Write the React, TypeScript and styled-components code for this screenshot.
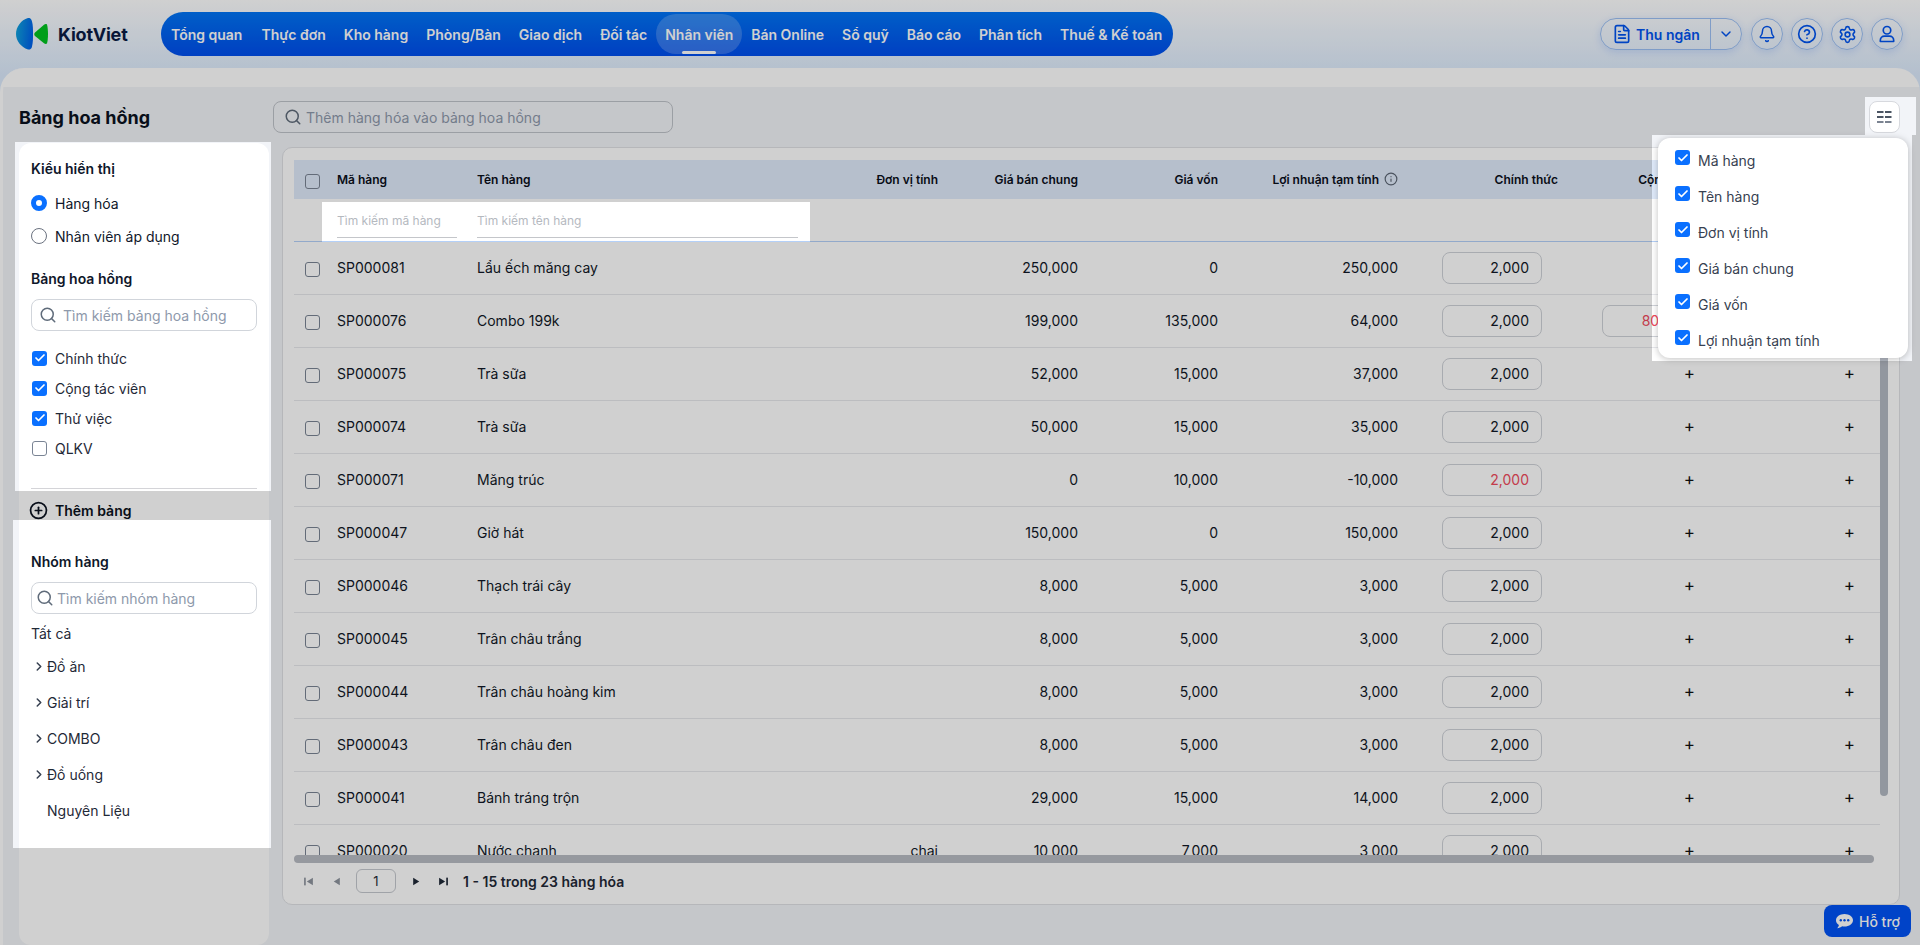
import React from "react";
import styled, { createGlobalStyle, css } from "styled-components";
import { Bell, Check, ChevronDown, ChevronRight, CircleHelp, FileText, Info, PlusCircle, Search, Settings } from "lucide-react";

const GlobalStyle = createGlobalStyle`
  html, body { margin: 0; padding: 0; }
  body { font-family: Inter, "Noto Sans", sans-serif; color: #0f172a; font-size: 14px; overflow: hidden; }
  * { box-sizing: border-box; }
`;

const Page = styled.div`
  position: relative; width: 1920px; height: 945px; overflow: hidden;
  display: flex; flex-direction: column;
  background: linear-gradient(180deg, #ffffff 0, #dcebfd 75px);
`;
/* Tour mask: dims everything except the highlighted holes */
const TourMask = styled.div`
  position: absolute; inset: 0; z-index: 100; pointer-events: none;
  background: rgba(0, 0, 0, 0.184);
  clip-path: path(evenodd, "M0 0H1920V945H0Z M15 142H271V491H15Z M13 520H271V848H13Z M322 202H810V242H322Z M1865 97H1916V135H1865Z M1652 135H1912V361H1652Z");
`;

const TopBar = styled.header`
  height: 68px; flex: none; display: flex; align-items: center; padding: 0 17px 0 16px;
`;
const Brand = styled.div`
  width: 145px; display: flex; align-items: center; gap: 9px;
`;
const BrandName = styled.span`
  font-size: 18px; font-weight: 700; color: #0b1b45; letter-spacing: -0.2px;
`;
const Nav = styled.nav`
  height: 44px; width: 1012px; padding: 0 1px; display: flex; align-items: center;
  border-radius: 22px; background: linear-gradient(180deg, #0074f5, #004eee);
`;
const NavItem = styled.a<{ $active?: boolean }>`
  position: relative; height: 40px; padding: 0 9px; display: flex; align-items: center;
  color: #fff; font-size: 14px; font-weight: 600; white-space: nowrap; border-radius: 20px;
  &:first-child { padding-right: 10px; }
  ${(p) => p.$active && css`
    background: rgba(255, 255, 255, 0.2);
    &::after { content: ""; position: absolute; left: 26px; right: 26px; bottom: 0; height: 3px; background: #fff; border-radius: 2px; }
  `}
`;
const Actions = styled.div`
  margin-left: auto; display: flex; align-items: center; gap: 8px; color: #0054f0;
`;
const RoleButton = styled.div`
  height: 32px; width: 142px; display: flex; align-items: center; border: 1px solid #9cc0f4;
  border-radius: 16px; box-shadow: 0 2px 8px rgba(0, 90, 240, 0.15); margin-right: 1px;
`;
const RoleMain = styled.div`
  width: 110px; height: 100%; display: flex; align-items: center; gap: 4px; padding-left: 11px;
  border-right: 1px solid #9cc0f4; font-weight: 600; font-size: 14px; white-space: nowrap;
`;
const RoleCaret = styled.div`
  flex: 1; display: flex; align-items: center; justify-content: center;
`;
const RoundButton = styled.div`
  width: 32px; height: 32px; border-radius: 50%; border: 1px solid #9cc0f4;
  display: flex; align-items: center; justify-content: center;
  box-shadow: 0 2px 8px rgba(0, 90, 240, 0.15);
`;

const Main = styled.main`
  flex: 1; min-height: 0; border-radius: 24px 24px 0 0; padding: 33px 20px 0 19px;
  display: flex;
  background: linear-gradient(180deg, #ffffff 19px, #f2f4f8 19px);
  border-left: 3px solid #fff; 
`;
const LeftColumn = styled.aside`
  width: 250px; margin-left: -3px; flex: none; display: flex; flex-direction: column;
`;
const PageTitle = styled.h1`
  margin: 0; height: 32px; display: flex; align-items: center; font-size: 18px; font-weight: 700; color: #0b1220;
`;
const SideCard = styled.div`
  flex: 1; margin-top: 10px; padding: 16px 12px 0; background: #fff; border-radius: 12px;
`;
const SideHeading = styled.div<{ $top?: number }>`
  height: 20px; line-height: 20px; font-size: 14px; font-weight: 600; color: #0f172a;
  margin-top: ${(p) => p.$top ?? 0}px;
`;
const RadioRow = styled.label<{ $top: number }>`
  height: 24px; display: flex; align-items: center; gap: 8px; margin-top: ${(p) => p.$top}px;
`;
const Radio = styled.span<{ $on?: boolean }>`
  width: 16px; height: 16px; border-radius: 50%; flex: none;
  ${(p) => p.$on ? css`border: 5px solid #0a70ff; background: #fff;` : css`border: 1px solid #6b7280; background: #fff;`}
`;
const SearchField = styled.div<{ $gap: number; $pad: number }>`
  height: 32px; margin-top: 10px; padding-left: ${(p) => p.$pad}px; display: flex; align-items: center;
  gap: ${(p) => p.$gap}px; border: 1px solid #d1d5db; border-radius: 8px; background: #fff; color: #5f6b7a;
`;
const Placeholder = styled.span`
  color: #8e99ab; font-size: 14px; white-space: nowrap;
`;
const CheckList = styled.div`
  margin-top: 15px; display: flex; flex-direction: column; gap: 6px;
`;
const CheckRow = styled.label`
  height: 24px; display: flex; align-items: center; gap: 8px; color: #1f2937;
`;
const Box = styled.span<{ $on?: boolean }>`
  width: 15px; height: 15px; margin-left: 1px; border-radius: 3px; flex: none; display: flex; align-items: center; justify-content: center;
  color: #fff; background: ${(p) => (p.$on ? "#0a70ff" : "transparent")};
  border: ${(p) => (p.$on ? "none" : "1.3px solid #7a8494")};
`;
const Rule = styled.hr`
  margin: 28px 0 0; border: 0; border-top: 1px solid #d4d4d8;
`;
const AddRow = styled.div`
  height: 20px; margin: 11px 0 0 -2px; display: flex; align-items: center; gap: 7px; font-weight: 600; color: #0b1220;
`;
const PlainText = styled.div`
  height: 20px; line-height: 20px; margin-top: 10px; color: #1f2937;
`;
const Tree = styled.div`
  margin-top: 4px;
`;
const TreeRow = styled.div`
  height: 36px; display: flex; align-items: center; padding-left: 16px; position: relative; color: #1f2937;
`;
const TreeCaret = styled.span`
  width: 14px; margin-left: -15px; margin-right: 1px; display: flex; color: #374151;
`;

const RightColumn = styled.section`
  flex: 1; min-width: 0; margin-left: 4px; display: flex; flex-direction: column;
`;
const Toolbar = styled.div`
  position: relative; height: 32px; flex: none; display: flex; justify-content: space-between;
`;
const ProductSearch = styled(SearchField)`
  width: 400px; margin-top: 0; border-color: #bfc3c9; background: transparent;
`;
const ColumnButton = styled.div`
  width: 31px; height: 32px; border: 1px solid #d7d9de; border-radius: 8px; background: #fff;
  display: flex; align-items: center; justify-content: center;
`;
const ColumnMenu = styled.div`
  position: absolute; top: 37px; right: -8px; width: 250px; height: 220px; padding-top: 4px;
  background: #fff; border-radius: 12px; box-shadow: 0 1px 7px rgba(0, 0, 0, 0.25); z-index: 10;
`;
const MenuItem = styled.div`
  height: 36px; padding-left: 16px; display: flex; align-items: center; gap: 8px; color: #374151;
  ${Box} { margin-top: -5px; }
`;

const TableCard = styled.div`
  margin: 14px 0 0 9px; height: 758px; flex: none; display: flex; flex-direction: column;
  background: #fff; border: 1px solid #dfe1e5; border-radius: 10px; padding: 12px 11px 0;
`;
const TableArea = styled.div`
  position: relative; height: 703px; flex: none; display: flex; flex-direction: column;
`;
const columns = css`
  display: grid; grid-template-columns: 36px 147px 323px 138px 140px 140px 180px 160px 160px 160px; width: 1586px; align-items: center;
`;
const HeaderRow = styled.div`
  ${columns}; height: 39px; flex: none; background: #dfeafa; font-size: 12px; font-weight: 600; color: #0b0f1a;
`;
const FilterRow = styled.div`
  ${columns}; height: 43px; flex: none; border-bottom: 1px solid #b4d0f8;
`;
const RowsViewport = styled.div`
  flex: 1; min-height: 0; overflow: hidden;
`;
const BodyRow = styled.div`
  ${columns}; height: 53px; border-bottom: 1px solid #e7e8ec; color: #111827;
`;
const BoxCell = styled.div`
  display: flex; justify-content: center;
  ${Box} { margin-left: 0; margin-top: 2px; }
`;
const HeaderBoxCell = styled(BoxCell)`
  ${Box} { margin-top: 4px; }
`;
const LeftCell = styled.div`
  padding: 0 0 1px 7px; white-space: nowrap;
`;
const NameCell = styled.div`
  padding-bottom: 1px; white-space: nowrap;
`;
const RightCell = styled.div`
  display: flex; justify-content: flex-end; align-items: center; gap: 5px; padding-bottom: 1px; white-space: nowrap;
`;
const FilterField = styled.div<{ $left: number; $width: number }>`
  grid-column: span 1; margin-left: ${(p) => p.$left}px; width: ${(p) => p.$width}px; height: 29px; margin-top: 7px;
  padding-top: 4px; border-bottom: 1px solid #c4c6ca; font-size: 12px; color: #b5b9bf; white-space: nowrap;
`;
const MoneyCell = styled.div`
  display: flex; justify-content: flex-end; padding-right: 16px;
`;
const MoneyBox = styled.div<{ $red?: boolean }>`
  width: 100px; height: 32px; padding: 0 12px 1px 0; display: flex; align-items: center; justify-content: flex-end;
  border: 1px solid #cfd2d8; border-radius: 8px; color: ${(p) => (p.$red ? "#f04a5c" : "#111827")};
`;
const PlusCell = styled.div`
  display: flex; justify-content: flex-end; padding: 0 23px 2px 0; color: #111; font-size: 17px; line-height: 1;
`;
const VerticalThumb = styled.div`
  position: absolute; top: 0; right: 0; width: 8px; height: 636px; border-radius: 4px; background: #b4b9c3;
`;
const HorizontalThumb = styled.div`
  height: 8px; flex: none; width: 1580px; border-radius: 4px; background: #b8bcc3;
`;
const Pager = styled.div`
  height: 36px; flex: none; display: flex; align-items: center; padding-left: 9px; color: #1f2937;
`;
const PagerIcon = styled.svg<{ $muted?: boolean; $right: number }>`
  width: 11px; height: 11px; flex: none; margin-right: ${(p) => p.$right}px; fill: ${(p) => (p.$muted ? "#8e949e" : "#1f2937")};
`;
const PageBox = styled.div`
  width: 40px; height: 24px; border: 1px solid #c5c8ce; border-radius: 6px; display: flex; align-items: center; justify-content: center;
  margin: 0 15px 0 -1px; font-size: 13px;
`;
const PagerText = styled.span`
  font-weight: 600; margin-left: 14px; white-space: nowrap;
`;
const SupportButton = styled.div`
  position: absolute; left: 1824px; top: 905px; width: 87px; height: 32px; z-index: 20; border-radius: 8px;
  background: #0053f5; color: #fff; display: flex; align-items: center; gap: 6px; padding-left: 12px; font-weight: 500; font-size: 14px;
`;

const navItems = ["Tổng quan", "Thực đơn", "Kho hàng", "Phòng/Bàn", "Giao dịch", "Đối tác", "Nhân viên", "Bán Online", "Sổ quỹ", "Báo cáo", "Phân tích", "Thuế & Kế toán"];
const menuItems = ["Mã hàng", "Tên hàng", "Đơn vị tính", "Giá bán chung", "Giá vốn", "Lợi nhuận tạm tính"];
type Row = { code: string; name: string; unit?: string; price: string; cost: string; profit: string; red?: boolean; extra?: string };
const rows: Row[] = [
  { code: "SP000081", name: "Lẩu ếch măng cay", price: "250,000", cost: "0", profit: "250,000" },
  { code: "SP000076", name: "Combo 199k", price: "199,000", cost: "135,000", profit: "64,000", extra: "80,000" },
  { code: "SP000075", name: "Trà sữa", price: "52,000", cost: "15,000", profit: "37,000" },
  { code: "SP000074", name: "Trà sữa", price: "50,000", cost: "15,000", profit: "35,000" },
  { code: "SP000071", name: "Măng trúc", price: "0", cost: "10,000", profit: "-10,000", red: true },
  { code: "SP000047", name: "Giờ hát", price: "150,000", cost: "0", profit: "150,000" },
  { code: "SP000046", name: "Thạch trái cây", price: "8,000", cost: "5,000", profit: "3,000" },
  { code: "SP000045", name: "Trân châu trắng", price: "8,000", cost: "5,000", profit: "3,000" },
  { code: "SP000044", name: "Trân châu hoàng kim", price: "8,000", cost: "5,000", profit: "3,000" },
  { code: "SP000043", name: "Trân châu đen", price: "8,000", cost: "5,000", profit: "3,000" },
  { code: "SP000041", name: "Bánh tráng trộn", price: "29,000", cost: "15,000", profit: "14,000" },
  { code: "SP000020", name: "Nước chanh", unit: "chai", price: "10,000", cost: "7,000", profit: "3,000" },
];

const CheckBox = ({ on }: { on?: boolean }) => (
  <Box $on={on}>{on && <Check size={12} strokeWidth={3.5} />}</Box>
);

const Logo = () => (
  <svg width="33" height="32" viewBox="0 0 33 32">
    <defs>
      <linearGradient id="lens" x1="0" y1="0.2" x2="1" y2="0.4">
        <stop offset="0" stopColor="#10a4dc" />
        <stop offset="1" stopColor="#0062ea" />
      </linearGradient>
    </defs>
    <path d="M12 0C5 2 0 9 0 16c0 7 5 13 12 15.500c2 .3 3.500-.5 4-3 1-4 1-8 1-12.500s0-9-1-12.500C15.500 1 14 -.5 12 0Z" fill="url(#lens)" />
    <path d="M31 6.500c-1-.8-2-.5-3 .2L19 14.500c-1 1-1 2.500 0 3.500l9 7.300c1 .7 2 1 3 .2 .7-2.500 1-6 1-9.500s-.3-7-1-9.500Z" fill="#00c21f" />
  </svg>
);

const UserIcon = () => (
  <svg width="20" height="20" viewBox="0 0 24 24" fill="none" stroke="currentColor" strokeWidth="2" strokeLinejoin="round">
    <circle cx="12" cy="7.500" r="4.500" />
    <path d="M4 21v-1.500a5 5 0 0 1 5-5h6a5 5 0 0 1 5 5V21Z" />
  </svg>
);

const ColumnsIcon = () => (
  <svg width="15" height="13" viewBox="0 0 15 13" fill="#4b5563">
    <rect x="0" y="0" width="6.500" height="2" /><rect x="8" y="0" width="6.500" height="2" />
    <rect x="0" y="5" width="6.500" height="2" /><rect x="8" y="5" width="6.500" height="2" />
    <rect x="0" y="10" width="6.500" height="2" fill="#7b8391" /><rect x="8" y="10" width="6.500" height="2" fill="#7b8391" />
  </svg>
);

const ChatIcon = () => (
  <svg width="17" height="15" viewBox="0 0 17 15">
    <path d="M8.500 0C3.800 0 0 2.800 0 6.300c0 1.900 1.100 3.600 2.900 4.700-.2 1.200-.9 2.400-1.700 3.300 1.900-.2 3.700-1 4.900-2 .8.200 1.600.3 2.400.3 4.700 0 8.500-2.800 8.500-6.300S13.200 0 8.500 0Z" fill="#fff" />
    <circle cx="4.800" cy="6.300" r="1.200" fill="#0053f5" /><circle cx="8.500" cy="6.300" r="1.200" fill="#0053f5" /><circle cx="12.200" cy="6.300" r="1.200" fill="#0053f5" />
  </svg>
);

export default function App() {
  return (
    <Page>
      <GlobalStyle />
      <TopBar>
        <Brand>
          <Logo />
          <BrandName>KiotViet</BrandName>
        </Brand>
        <Nav>
          {navItems.map((item) => (
            <NavItem key={item} $active={item === "Nhân viên"}>{item}</NavItem>
          ))}
        </Nav>
        <Actions>
          <RoleButton>
            <RoleMain><FileText size={20} strokeWidth={2} />Thu ngân</RoleMain>
            <RoleCaret><ChevronDown size={16} strokeWidth={2.2} /></RoleCaret>
          </RoleButton>
          <RoundButton><Bell size={18} strokeWidth={2} /></RoundButton>
          <RoundButton><CircleHelp size={20} strokeWidth={2} /></RoundButton>
          <RoundButton><Settings size={19} strokeWidth={2} /></RoundButton>
          <RoundButton><UserIcon /></RoundButton>
        </Actions>
      </TopBar>
      <Main>
        <LeftColumn>
          <PageTitle>Bảng hoa hồng</PageTitle>
          <SideCard>
            <SideHeading>Kiểu hiển thị</SideHeading>
            <RadioRow $top={12}><Radio $on />Hàng hóa</RadioRow>
            <RadioRow $top={9}><Radio />Nhân viên áp dụng</RadioRow>
            <SideHeading $top={21}>Bảng hoa hồng</SideHeading>
            <SearchField $gap={6} $pad={7}>
              <Search size={18} /><Placeholder>Tìm kiếm bảng hoa hồng</Placeholder>
            </SearchField>
            <CheckList>
              <CheckRow><CheckBox on />Chính thức</CheckRow>
              <CheckRow><CheckBox on />Cộng tác viên</CheckRow>
              <CheckRow><CheckBox on />Thử việc</CheckRow>
              <CheckRow><CheckBox />QLKV</CheckRow>
            </CheckList>
            <Rule />
            <AddRow><PlusCircle size={19} strokeWidth={2.2} />Thêm bảng</AddRow>
            <SideHeading $top={32}>Nhóm hàng</SideHeading>
            <SearchField $gap={3} $pad={4}>
              <Search size={18} /><Placeholder>Tìm kiếm nhóm hàng</Placeholder>
            </SearchField>
            <PlainText>Tất cả</PlainText>
            <Tree>
              {["Đồ ăn", "Giải trí", "COMBO", "Đồ uống"].map((g) => (
                <TreeRow key={g}><TreeCaret><ChevronRight size={15} strokeWidth={2.6} /></TreeCaret>{g}</TreeRow>
              ))}
              <TreeRow>Nguyên Liệu</TreeRow>
            </Tree>
          </SideCard>
        </LeftColumn>
        <RightColumn>
          <Toolbar>
            <ProductSearch $gap={4} $pad={10}>
              <Search size={18} /><Placeholder>Thêm hàng hóa vào bảng hoa hồng</Placeholder>
            </ProductSearch>
            <ColumnButton><ColumnsIcon /></ColumnButton>
            <ColumnMenu>
              {menuItems.map((m) => (
                <MenuItem key={m}><CheckBox on />{m}</MenuItem>
              ))}
            </ColumnMenu>
          </Toolbar>
          <TableCard>
            <TableArea>
              <HeaderRow>
                <HeaderBoxCell><CheckBox /></HeaderBoxCell>
                <LeftCell>Mã hàng</LeftCell>
                <NameCell>Tên hàng</NameCell>
                <RightCell>Đơn vị tính</RightCell>
                <RightCell>Giá bán chung</RightCell>
                <RightCell>Giá vốn</RightCell>
                <RightCell>Lợi nhuận tạm tính<Info size={14} color="#5c6674" /></RightCell>
                <RightCell>Chính thức</RightCell>
                <RightCell>Cộng tác viên</RightCell>
                <RightCell>Thử việc</RightCell>
              </HeaderRow>
              <FilterRow>
                <span />
                <FilterField $left={7} $width={120}>Tìm kiếm mã hàng</FilterField>
                <FilterField $left={0} $width={321}>Tìm kiếm tên hàng</FilterField>
              </FilterRow>
              <RowsViewport>
                {rows.map((r) => (
                  <BodyRow key={r.code}>
                    <BoxCell><CheckBox /></BoxCell>
                    <LeftCell>{r.code}</LeftCell>
                    <NameCell>{r.name}</NameCell>
                    <RightCell>{r.unit}</RightCell>
                    <RightCell>{r.price}</RightCell>
                    <RightCell>{r.cost}</RightCell>
                    <RightCell>{r.profit}</RightCell>
                    <MoneyCell><MoneyBox $red={r.red}>2,000</MoneyBox></MoneyCell>
                    {r.extra ? <MoneyCell><MoneyBox $red>{r.extra}</MoneyBox></MoneyCell> : <PlusCell>+</PlusCell>}
                    <PlusCell>+</PlusCell>
                  </BodyRow>
                ))}
              </RowsViewport>
              <HorizontalThumb />
              <VerticalThumb />
            </TableArea>
            <Pager>
              <PagerIcon $muted $right={17} viewBox="0 0 10 10"><rect x="1" y="1.500" width="1.500" height="7" /><path d="M9 1.500v7L3.500 5Z" /></PagerIcon>
              <PagerIcon $muted $right={15} viewBox="0 0 10 10"><path d="M8 1.500v7L2.500 5Z" /></PagerIcon>
              <PageBox>1</PageBox>
              <PagerIcon $right={16} viewBox="0 0 10 10"><path d="M2 1.500v7L7.500 5Z" /></PagerIcon>
              <PagerIcon $right={0} viewBox="0 0 10 10"><path d="M1 1.500v7L6.500 5Z" /><rect x="7.500" y="1.500" width="1.500" height="7" /></PagerIcon>
              <PagerText>1 - 15 trong 23 hàng hóa</PagerText>
            </Pager>
          </TableCard>
        </RightColumn>
      </Main>
      <SupportButton><ChatIcon />Hỗ trợ</SupportButton>
      <TourMask />
    </Page>
  );
}
